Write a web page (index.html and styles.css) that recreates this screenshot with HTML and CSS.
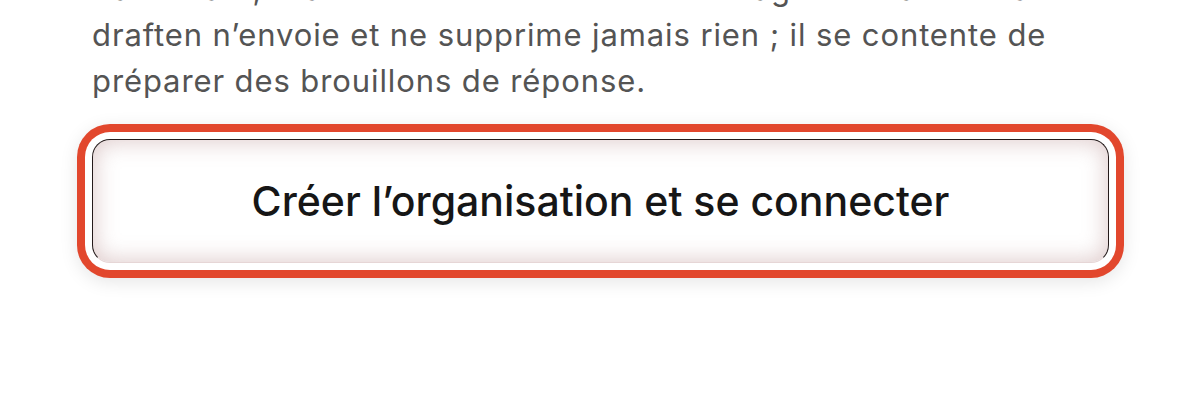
FILE: index.html
```html
<!DOCTYPE html>
<html lang="fr">
<head>
<meta charset="utf-8">
<link rel="stylesheet" href="styles.css">
</head>
<body>
<main class="panel">
  <p class="note">Par défaut, draften lit et trie tous vos messages entrants. Mais
  draften n’envoie et ne supprime jamais rien ; il se contente de préparer des brouillons de réponse.</p>
  <button class="cta" type="button">Créer l’organisation et se connecter</button>
</main>
</body>
</html>
```
FILE: styles.css
```css
html, body {
  margin: 0;
  padding: 0;
  background: #ffffff;
  height: 100%;
}
body {
  font-family: Inter, "Noto Sans", sans-serif;
  overflow: hidden;
  min-height: 400px;
}
.panel {
  width: 1017px;
  margin-left: 92px;
  display: flex;
  flex-direction: column;
}
.note {
  margin: -34px 0 0 0;
  font-size: 31px;
  line-height: 46px;
  letter-spacing: 0.9px;
  color: #545454;
  font-weight: 400;
}
.cta {
  margin-top: 35px;
  height: 124px;
  width: 1017px;
  border-radius: 18px;
  background: #ffffff;
  border: 1.5px solid #241a1a;
  border-bottom-color: #e6d6d6;
  font-family: Inter, "Noto Sans", sans-serif;
  font-size: 41px;
  font-weight: 500;
  color: #161616;
  box-shadow:
    inset 0 0 22px 2px rgba(170, 120, 120, 0.38),
    0 0 0 7px #ffffff,
    0 0 0 15px #e2472d,
    0 4px 18px 15px rgba(0, 0, 0, 0.10);
}
```
